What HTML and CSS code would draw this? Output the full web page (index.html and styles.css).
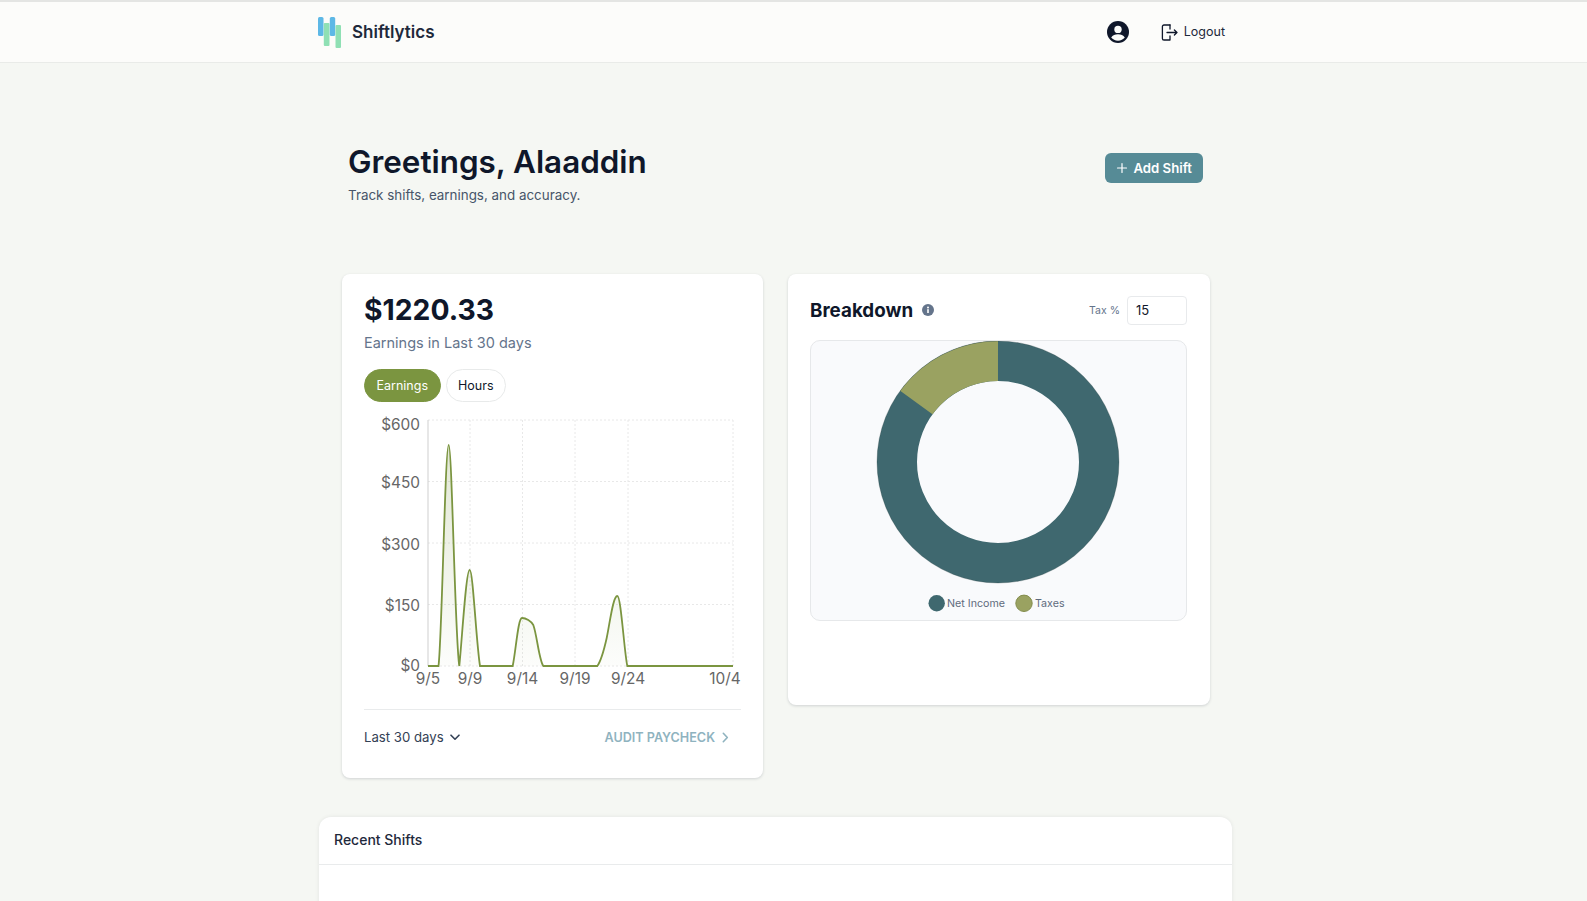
FILE: index.html
```html
<!DOCTYPE html>
<html lang="en">
<head>
  <meta charset="UTF-8">
  <title>Shiftlytics</title>
  <link rel="stylesheet" href="styles.css">
</head>
<body>

  <header class="topbar">
    <div class="topbar-inner">
      <a class="brand">
        <svg class="brand-logo" width="25" height="33" viewBox="0 0 25 33">
          <rect x="0" y="0" width="5.500" height="19" rx="1.500" fill="#5db8e6"/>
          <rect x="5.800" y="6" width="5.700" height="23" rx="1" fill="#8fe0b4"/>
          <rect x="11.800" y="0" width="5.400" height="19" rx="1.500" fill="#5db8e6"/>
          <rect x="17.500" y="8" width="5.500" height="23" rx="1" fill="#8fe0b4"/>
        </svg>
        <span>Shiftlytics</span>
      </a>
      <div class="topbar-actions">
        <svg class="user-icon" width="22" height="22" viewBox="0 0 22 22">
          <circle cx="11" cy="11" r="11" fill="#0f172a"/>
          <circle cx="11" cy="8.400" r="3.700" fill="#fcfcfa"/>
          <path d="M4.200 16.600c1.400-2.400 3.900-3.400 6.800-3.400s5.400 1 6.800 3.400c-1.600 2-4 3.200-6.800 3.200s-5.200-1.200-6.800-3.200z" fill="#fcfcfa"/>
        </svg>
        <a class="logout">
          <svg width="17" height="17" viewBox="0 0 17 17" fill="none" stroke="#0f172a" stroke-width="1.300" stroke-linecap="round" stroke-linejoin="round">
            <path d="M9 1H3a1.600 1.600 0 0 0-1.600 1.600v11.800A1.600 1.600 0 0 0 3 16h6v-4"/>
            <path d="M9 1v4"/>
            <path d="M6 8.500h10M13.400 6l2.600 2.500-2.600 2.500"/>
          </svg>
          <span class="logout-label">Logout</span>
        </a>
      </div>
    </div>
  </header>

  <main class="page">
    <section class="hero">
      <div>
        <h1>Greetings, Alaaddin</h1>
        <p class="hero-sub">Track shifts, earnings, and accuracy.</p>
      </div>
      <button class="add-btn">
        <svg width="12" height="12" viewBox="0 0 12 12" stroke="#fff" stroke-width="1.200" stroke-linecap="round"><path d="M6 1.500v9M1.500 6h9"/></svg>
        Add Shift
      </button>
    </section>

    <section class="cards">
      <div class="card card-earnings">
        <div class="amount">$1220.33</div>
        <div class="amount-sub">Earnings in Last 30 days</div>
        <div class="pills">
          <button class="pill pill-active">Earnings</button>
          <button class="pill">Hours</button>
        </div>
        <svg class="line-chart" width="377" height="278" viewBox="364 414 377 278">
          <defs>
            <linearGradient id="areaFill" x1="0" y1="0" x2="0" y2="1">
              <stop offset="0" stop-color="#7b9540" stop-opacity="0.22"/>
              <stop offset="1" stop-color="#7b9540" stop-opacity="0.02"/>
            </linearGradient>
          </defs>
          <g class="grid">
            <path d="M428 420H733M428 481.500H733M428 543H733M428 604.500H733M428 666H733"/>
            <path d="M470 420V666M522.500 420V666M575 420V666M628 420V666M733 420V666"/>
          </g>
          <path class="axis" d="M428 420V666"/>
          <path class="area" fill="url(#areaFill)" d="M428 666H438.500C442 640 445 445 448.700 445C452 445 455 640 459.300 666C462 640 466 570 469.700 570C473 570 476 640 480 666H512.700C516 650 518 618 522 618C526 618 531 621 533.300 625C537 635 539 660 543.300 666H597.300C601 661 604 650 606.700 638C610 622 613 596 617.300 596C621 596 624 650 627.300 666H733Z"/>
          <path class="line" d="M428 666H438.500C442 640 445 445 448.700 445C452 445 455 640 459.300 666C462 640 466 570 469.700 570C473 570 476 640 480 666H512.700C516 650 518 618 522 618C526 618 531 621 533.300 625C537 635 539 660 543.300 666H597.300C601 661 604 650 606.700 638C610 622 613 596 617.300 596C621 596 624 650 627.300 666H733"/>
          <g class="tick-y">
            <text x="420" y="430">$600</text>
            <text x="420" y="488">$450</text>
            <text x="420" y="550">$300</text>
            <text x="420" y="611">$150</text>
            <text x="420" y="671">$0</text>
          </g>
          <g class="tick-x">
            <text x="428" y="684">9/5</text>
            <text x="470" y="684">9/9</text>
            <text x="522.500" y="684">9/14</text>
            <text x="575" y="684">9/19</text>
            <text x="628" y="684">9/24</text>
            <text x="725" y="684">10/4</text>
          </g>
        </svg>
        <div class="card-foot">
          <span class="range">Last 30 days
            <svg width="10" height="7" viewBox="0 0 10 7" fill="none" stroke="#334155" stroke-width="1.600" stroke-linecap="round" stroke-linejoin="round"><path d="M1 1.200l4 4 4-4"/></svg>
          </span>
          <span class="audit">AUDIT PAYCHECK
            <svg width="7" height="11" viewBox="0 0 7 11" fill="none" stroke="#8fb3bf" stroke-width="1.600" stroke-linecap="round" stroke-linejoin="round"><path d="M1.300 1.300l4 4.200-4 4.200"/></svg>
          </span>
        </div>
      </div>

      <div class="card card-breakdown">
        <div class="breakdown-head">
          <div class="breakdown-title">
            <h2>Breakdown</h2>
            <svg width="12" height="12" viewBox="0 0 12 12">
              <circle cx="6" cy="6" r="6" fill="#64748b"/>
              <rect x="5.200" y="5.200" width="1.600" height="3.800" fill="#fff"/>
              <circle cx="6" cy="3.500" r="1" fill="#fff"/>
            </svg>
          </div>
          <label class="tax">
            <span>Tax %</span>
            <input class="tax-input" type="text" value="15">
          </label>
        </div>
        <div class="donut-panel">
          <svg class="donut" width="375" height="279" viewBox="811 341 375 279">
            <circle cx="998" cy="462" r="101" fill="none" stroke="#3f686f" stroke-width="40"/>
            <path d="M998 361A101 101 0 0 0 916.300 402.600" fill="none" stroke="#9aa261" stroke-width="40"/>
            <circle cx="998" cy="462" r="121" class="donut-edge"/>
            <circle cx="936.700" cy="603.300" r="8.200" fill="#3f686f"/>
            <circle cx="1024" cy="603.300" r="8.200" fill="#9aa261" stroke="#838c4c" stroke-width="1"/>
            <text class="legend" x="947" y="607">Net Income</text>
            <text class="legend" x="1035" y="607">Taxes</text>
          </svg>
        </div>
      </div>
    </section>

    <section class="recent">
      <div class="recent-head">Recent Shifts</div>
      <div class="recent-body"></div>
    </section>
  </main>

</body>
</html>
```

FILE: styles.css
```css
html {
  overflow: hidden;
}

body {
  margin: 0;
  height: 901px;
  overflow: hidden;
  background: #f5f7f3;
  color: #0f172a;
  font-family: Inter, "Liberation Sans", sans-serif;
}

button,
input {
  font-family: inherit;
}

/* Top bar */
.topbar {
  height: 60px;
  border-top: 2px solid #e4e5e3;
  border-bottom: 1px solid #e9ebe8;
  background: #fcfcfa;
  padding-right: 36px;
}

.topbar-inner {
  width: 913px;
  height: 100%;
  margin: 0 auto;
  display: flex;
  align-items: center;
  justify-content: space-between;
}

.brand {
  display: flex;
  align-items: center;
  gap: 9px;
  margin-left: -1px;
  font-size: 17px;
  font-weight: 600;
  color: #1e293b;
}

.brand-logo {
  margin-top: 3px;
}

.topbar-actions {
  display: flex;
  align-items: center;
  gap: 32px;
  margin-right: 7px;
}

.logout {
  display: flex;
  align-items: center;
  gap: 6px;
  font-size: 12.500px;
  color: #1e293b;
}

.logout-label {
  padding-bottom: 2px;
}

/* Page */
.page {
  width: 913px;
  margin: 0 auto;
  padding-right: 36px;
}

.hero {
  display: flex;
  justify-content: space-between;
  align-items: flex-start;
  padding: 80px 29px 0;
  height: 131px;
}

.hero h1 {
  margin: 0;
  font-size: 31.400px;
  line-height: 38px;
  font-weight: 600;
}

.hero-sub {
  margin: 4px 0 0;
  font-size: 13.400px;
  line-height: 20px;
  color: #475569;
}

.add-btn {
  display: flex;
  align-items: center;
  gap: 5px;
  margin-top: 10px;
  height: 30px;
  padding: 0 11px;
  border: 0;
  border-radius: 6px;
  background: #568b96;
  color: #fff;
  font-size: 13.200px;
  font-weight: 600;
}

.cards {
  display: grid;
  grid-template-columns: 421px 422px;
  gap: 25px;
  align-items: start;
  padding: 0 23px;
}

.card {
  box-sizing: border-box;
  background: #fff;
  border-radius: 8px;
  padding: 22px;
  box-shadow: 0 1px 3px rgba(15, 23, 42, 0.16);
}

.card-earnings {
  height: 504px;
  padding-top: 18px;
}

.card-breakdown {
  height: 431px;
  padding: 21px 23px 22px 22px;
}

.amount {
  font-size: 28.300px;
  line-height: 36px;
  font-weight: 700;
}

.amount-sub {
  margin-top: 5px;
  font-size: 14.500px;
  line-height: 20px;
  color: #64748b;
}

.pills {
  display: flex;
  gap: 5px;
  margin-top: 16px;
}

.pill {
  height: 33px;
  padding: 0 11.500px;
  border: 1px solid #e8eaea;
  border-radius: 17px;
  background: #fff;
  color: #0f172a;
  font-size: 12.500px;
}

.pill-active {
  border-color: #7b9540;
  background: #7b9540;
  color: #fff;
}

.line-chart {
  display: block;
  margin-top: 12px;
}

.grid path {
  fill: none;
  stroke: #e8e8e8;
  stroke-dasharray: 2 2;
}

.axis {
  stroke: #cfcfcf;
  fill: none;
}

.line {
  fill: none;
  stroke: #7b9540;
  stroke-width: 1.800;
}

.tick-y text,
.tick-x text {
  font-size: 15.400px;
  fill: #666;
}

.tick-y text {
  text-anchor: end;
}

.tick-x text {
  text-anchor: middle;
}

.card-foot {
  display: flex;
  justify-content: space-between;
  align-items: center;
  margin-top: 17px;
  padding: 19px 12px 0 0;
  border-top: 1px solid #e9ebec;
  font-size: 13.200px;
}

.range {
  display: flex;
  align-items: center;
  gap: 6px;
  color: #334155;
}

.audit {
  display: flex;
  align-items: center;
  gap: 7px;
  font-size: 12.600px;
  font-weight: 600;
  color: #8fb3bf;
}

/* Breakdown */
.breakdown-head {
  display: flex;
  align-items: center;
  justify-content: space-between;
  height: 30px;
}

.breakdown-title {
  display: flex;
  align-items: center;
  gap: 9px;
}

.breakdown-title h2 {
  margin: 0;
  font-size: 18.800px;
  font-weight: 700;
}

.tax {
  display: flex;
  align-items: center;
  gap: 7px;
  font-size: 10.500px;
  color: #64748b;
}

.tax-input {
  box-sizing: border-box;
  width: 60px;
  height: 29px;
  padding: 0 8px;
  border: 1px solid #e8eaec;
  border-radius: 4px;
  color: #0f172a;
  font-size: 13px;
}

.donut-panel {
  box-sizing: border-box;
  height: 281px;
  margin-top: 15px;
  border: 1px solid #e6e8ea;
  border-radius: 10px;
  background: #f9fafc;
}

.donut {
  display: block;
}

.donut-edge {
  fill: none;
  stroke: rgba(30, 50, 50, 0.25);
  stroke-width: 1;
}

.legend {
  font-size: 10.700px;
  fill: #5f6b7c;
}

/* Recent shifts */
.recent {
  margin-top: 39px;
  background: #fff;
  border-radius: 12px;
  box-shadow: 0 0 4px rgba(15, 23, 42, 0.08);
}

.recent-head {
  height: 47px;
  padding-left: 15px;
  border-bottom: 1px solid #e9ebec;
  font-size: 14px;
  font-weight: 500;
  line-height: 46px;
  color: #1e293b;
}

.recent-body {
  height: 120px;
}
```
